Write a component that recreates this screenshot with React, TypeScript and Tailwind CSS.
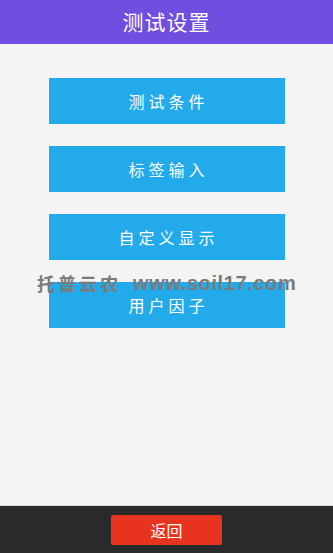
import React from 'react';

const items = ['测试条件', '标签输入', '自定义显示', '用户因子'];

export default function App() {
  return (
    <div
      className="relative flex h-[553px] w-[333px] flex-col bg-[#f4f4f4]"
      style={{ fontFamily: '"Noto Sans CJK SC", "Noto Sans", sans-serif' }}
    >
      <div className="flex h-[44px] items-center justify-center bg-[#6f4ee0] text-[21px] tracking-[1px] text-white">
        测试设置
      </div>

      <div className="flex flex-1 flex-col items-center gap-[22px] pt-[34px]">
        {items.map((t) => (
          <button
            key={t}
            className="flex h-[46px] w-[236px] items-center justify-center bg-[#22aaea] pl-[4px] text-[16px] tracking-[4px] text-white"
          >
            {t}
          </button>
        ))}
      </div>

      <div className="flex h-[48px] items-start justify-center border-t border-[#d8d8d8] bg-[#2a2a2a] pt-[9px]">
        <button className="flex h-[30px] w-[111px] items-center justify-center rounded-[2px] bg-[#e8341f] text-[16px] text-white">
          返回
        </button>
      </div>

      {/* watermark */}
      <div className="pointer-events-none absolute left-[37px] top-[268px] flex items-center whitespace-nowrap font-bold text-[#7b7b7b]">
        <span className="text-[18px] tracking-[3px]">托普云农</span>
        <span
          className="ml-[12px] text-[20px] tracking-[0.6px]"
          style={{ fontFamily: '"Liberation Sans", Arial, sans-serif' }}
        >
          www.soil17.com
        </span>
      </div>
    </div>
  );
}
